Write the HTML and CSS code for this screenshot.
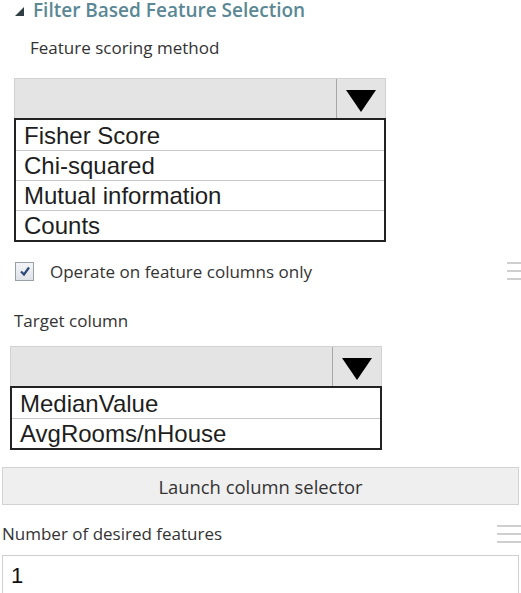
FILE: index.html
```html
<!DOCTYPE html>
<html>
<head>
<meta charset="utf-8">
<link rel="stylesheet" href="styles.css">
</head>
<body>
<div class="panel">
  <div class="header">
    <svg class="collapse" width="9" height="9" viewBox="0 0 9 9"><polygon points="9,0 9,9 0,9" fill="#2f3f44"/></svg>
    <span class="title">Filter Based Feature Selection</span>
  </div>

  <div class="label label-scoring">Feature scoring method</div>

  <div class="dropdown dd-scoring">
    <div class="dd-box">
      <div class="dd-value"></div>
      <div class="dd-arrow"><svg width="30" height="22" viewBox="0 0 30 22"><polygon points="0,0 30,0 15,22" fill="#000"/></svg></div>
    </div>
    <ul class="dd-list">
      <li>Fisher Score</li>
      <li>Chi-squared</li>
      <li>Mutual information</li>
      <li>Counts</li>
    </ul>
  </div>

  <div class="check-row">
    <span class="checkbox"><svg width="12" height="12" viewBox="0 0 12 12"><path d="M2 6.5 L5 9.5 L10 2.5" fill="none" stroke="#2d4a78" stroke-width="2.2"/></svg></span>
    <span class="check-text">Operate on feature columns only</span>
    <span class="menu menu-small"><i></i><i></i><i></i></span>
  </div>

  <div class="label label-target">Target column</div>

  <div class="dropdown dd-target">
    <div class="dd-box">
      <div class="dd-value"></div>
      <div class="dd-arrow"><svg width="30" height="22" viewBox="0 0 30 22"><polygon points="0,0 30,0 15,22" fill="#000"/></svg></div>
    </div>
    <ul class="dd-list">
      <li>MedianValue</li>
      <li>AvgRooms/nHouse</li>
    </ul>
  </div>

  <button class="launch">Launch column selector</button>

  <div class="label-row">
    <span class="label label-number">Number of desired features</span>
    <span class="menu menu-wide"><i></i><i></i><i></i></span>
  </div>

  <div class="number-input">1</div>
</div>
</body>
</html>
```

FILE: styles.css
```css
html, body {
  margin: 0;
  padding: 0;
  background: #ffffff;
}

.panel {
  display: flex;
  flex-direction: column;
  align-items: flex-start;
  width: 521px;
  overflow: hidden;
  font-family: "Open Sans", "Noto Sans", sans-serif;
  color: #333;
}

.header {
  display: flex;
  align-items: center;
  height: 20px;
  padding-left: 15px;
  gap: 9px;
}

.collapse {
  margin-top: 3px;
}

.title {
  font-size: 19px;
  font-weight: 600;
  color: #5a8894;
  line-height: 20px;
}

.label {
  font-size: 17px;
  line-height: 20px;
  color: #333;
}

.label-scoring {
  margin-top: 18px;
  margin-left: 30px;
}

.dropdown {
  display: flex;
  flex-direction: column;
  width: 372px;
}

.dd-scoring {
  margin-top: 20px;
  margin-left: 14px;
}

.dd-target {
  margin-top: 15px;
  margin-left: 10px;
}

.dd-box {
  display: flex;
  height: 40px;
  box-sizing: border-box;
  background: #e4e4e4;
  border: 1px solid #d2d2d2;
  border-bottom: none;
}

.dd-value {
  flex: 1;
}

.dd-arrow {
  width: 49px;
  border-left: 1px solid #a8a8a8;
  display: flex;
  align-items: center;
  justify-content: center;
  padding-top: 4px;
  box-sizing: border-box;
}

.dd-list {
  list-style: none;
  margin: 0;
  padding: 0;
  border: 2px solid #222;
  font-family: "Liberation Sans", Arial, sans-serif;
  font-size: 24px;
  color: #1e1e1e;
}

.dd-list li {
  height: 30px;
  box-sizing: border-box;
  line-height: 29px;
  padding-left: 8px;
  border-top: 1px solid #c8c8c8;
}

.dd-list li:first-child {
  border-top-color: transparent;
}

.check-row {
  display: flex;
  align-items: center;
  align-self: stretch;
  height: 20px;
  margin-top: 19px;
  padding-left: 15px;
}

.checkbox {
  width: 19px;
  height: 19px;
  box-sizing: border-box;
  border: 1px solid #9aa0a8;
  background: linear-gradient(#f4f5f8, #dfe2e8);
  display: flex;
  align-items: center;
  justify-content: center;
}

.check-text {
  margin-left: 16px;
  font-size: 17px;
  color: #333;
}

.menu {
  margin-left: auto;
  display: flex;
  flex-direction: column;
  gap: 6px;
}

.menu i {
  display: block;
  height: 2px;
  background: #cfcfcf;
}

.menu-small {
  width: 14px;
}

.menu-wide {
  width: 24px;
}

.label-target {
  margin-top: 30px;
  margin-left: 14px;
}

.launch {
  margin-top: 17px;
  margin-left: 2px;
  width: 517px;
  height: 38px;
  background: #efefef;
  border: 1px solid #d2d2d2;
  font-family: "Open Sans", "Noto Sans", sans-serif;
  font-size: 18.4px;
  color: #333;
  padding: 0;
}

.label-row {
  display: flex;
  align-items: center;
  align-self: stretch;
  margin-top: 19px;
  padding-left: 2px;
  height: 20px;
}

.number-input {
  margin-top: 11px;
  margin-left: 2px;
  width: 517px;
  height: 40px;
  box-sizing: border-box;
  border: 1px solid #cfcfcf;
  font-family: "Liberation Sans", Arial, sans-serif;
  font-size: 22px;
  line-height: 40px;
  padding-left: 8px;
  color: #111;
}
```
